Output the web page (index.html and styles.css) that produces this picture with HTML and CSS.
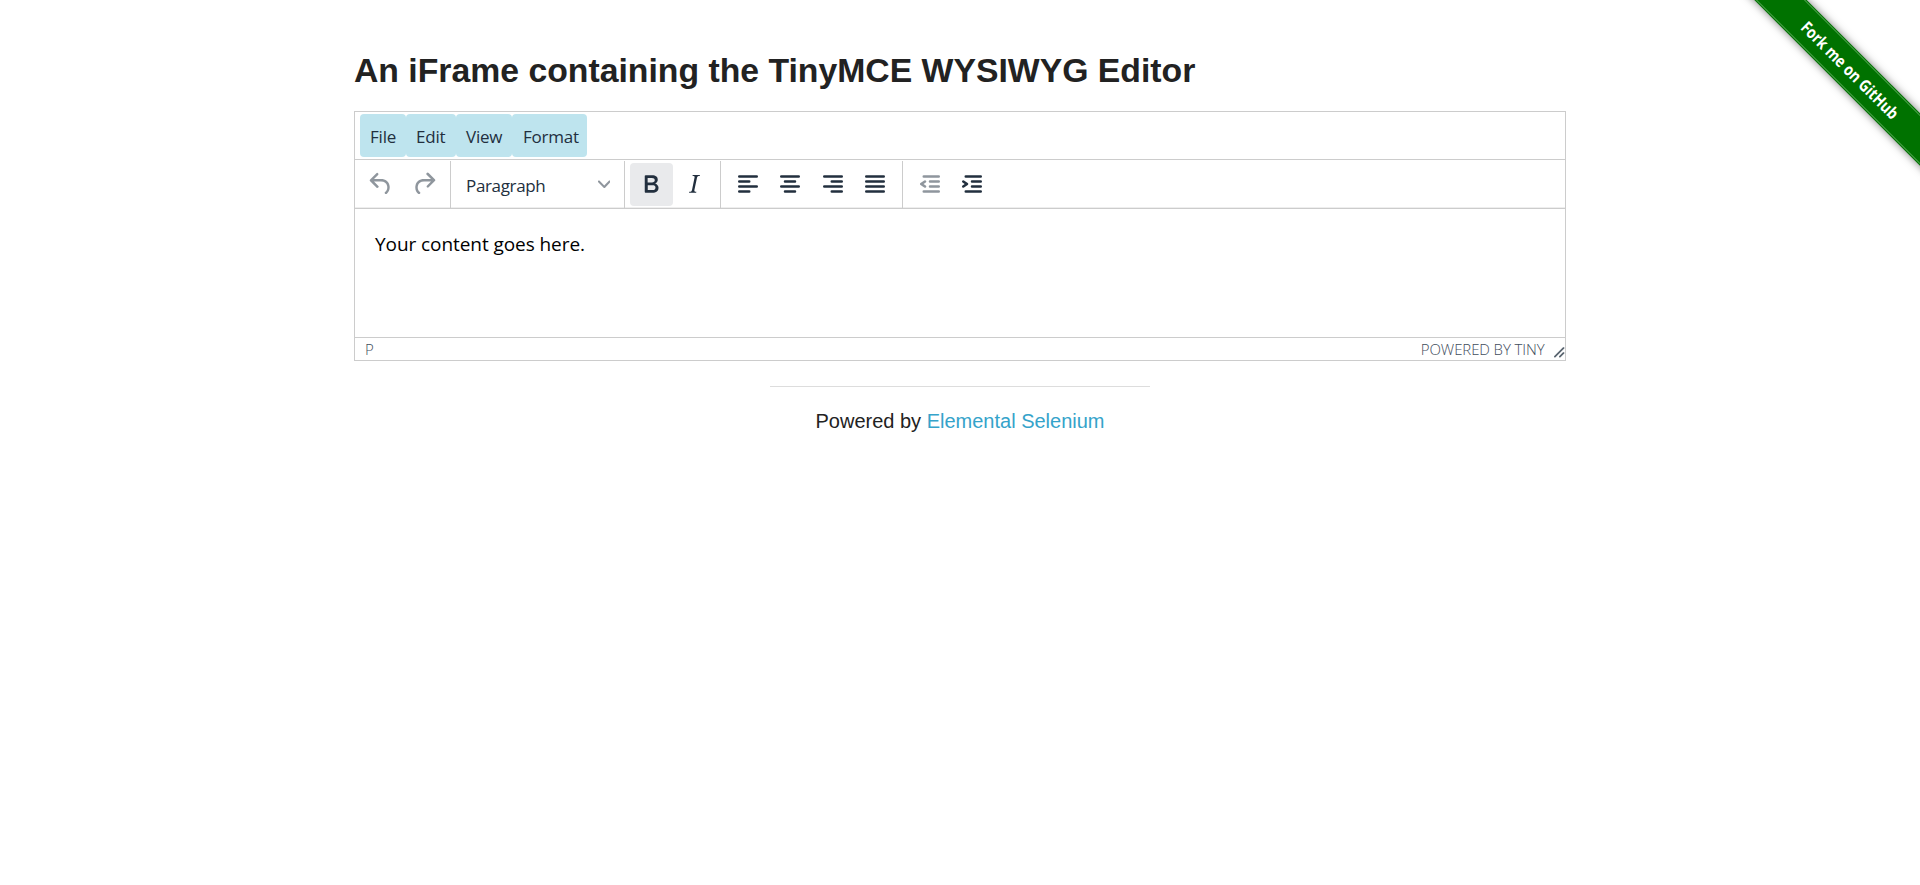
FILE: index.html
```html
<!DOCTYPE html>
<html lang="en">
<head>
<meta charset="utf-8">
<title>The Internet</title>
<link rel="stylesheet" href="styles.css">
</head>
<body>
<a class="ribbon"><span class="ribbon-band"><span class="ribbon-text">Fork me on GitHub</span></span></a>
<main class="page">
  <h3 class="title"><span class="title-text">An iFrame containing the TinyMCE WYSIWYG Editor</span></h3>
  <div class="editor">
    <div class="menubar">
      <button class="menu menu-file">File</button>
      <button class="menu menu-edit">Edit</button>
      <button class="menu menu-view">View</button>
      <button class="menu menu-format">Format</button>
    </div>
    <div class="toolbar">
      <div class="group">
        <button class="tool disabled"><svg class="icon" viewBox="0 0 24 24"><path d="M6.4 8H12c3.7 0 6.2 2 6.8 5.1.6 2.7-.4 5.6-2.3 6.8a1 1 0 0 1-1-1.8c1.1-.6 1.8-2.7 1.4-4.6-.5-2.1-2.1-3.5-4.9-3.5H6.4l3.3 3.3a1 1 0 1 1-1.4 1.4l-5-5a1 1 0 0 1 0-1.4l5-5a1 1 0 0 1 1.4 1.4L6.4 8z"/></svg></button>
        <button class="tool disabled"><svg class="icon" viewBox="0 0 24 24"><path d="M17.6 10H12c-2.8 0-4.4 1.4-4.9 3.5-.4 2 .3 4 1.4 4.6a1 1 0 1 1-1 1.8c-2-1.2-2.9-4.1-2.3-6.8.6-3 3-5.1 6.8-5.1h5.6l-3.3-3.3a1 1 0 1 1 1.4-1.4l5 5a1 1 0 0 1 0 1.4l-5 5a1 1 0 0 1-1.4-1.4l3.3-3.3z"/></svg></button>
      </div>
      <div class="group">
        <button class="select"><span class="select-text">Paragraph</span><svg class="chevron" viewBox="0 0 10 10"><path d="M8.7 2.2c.3-.3.8-.3 1 0 .4.4.4.9 0 1.2L5.7 7.8c-.3.3-.9.3-1.2 0L.2 3.4a.8.8 0 0 1 0-1.2c.3-.3.8-.3 1.1 0L5 6l3.7-3.8z"/></svg></button>
      </div>
      <div class="group group-style">
        <button class="tool active"><svg class="icon" viewBox="0 0 24 24"><path d="M7.8 19c-.3 0-.5 0-.6-.2l-.2-.5V5.7c0-.2 0-.4.2-.5l.6-.2h5c1.5 0 2.7.3 3.5 1 .7.6 1.1 1.4 1.1 2.5a3 3 0 0 1-.6 1.9c-.4.6-1 1-1.6 1.2.4.1.9.3 1.3.6s.8.7 1 1.2c.4.4.5 1 .5 1.6 0 1.3-.4 2.3-1.3 3-.8.7-2.1 1-3.8 1H7.8zm5-8.3c.6 0 1.2-.1 1.6-.5.4-.3.6-.7.6-1.3 0-1.1-.8-1.7-2.3-1.7H9.3v3.5h3.4zm.5 6c.7 0 1.3-.1 1.7-.4.4-.4.6-.9.6-1.5s-.2-1-.7-1.4c-.4-.3-1-.4-2-.4H9.4v3.8h4z"/></svg></button>
        <button class="tool"><svg class="icon" viewBox="0 0 24 24"><path d="M16.7 4.7l-.1.9h-.3c-.6 0-1 0-1.4.3-.3.3-.4.6-.5 1.1l-2.1 9.8v.6c0 .5.4.8 1.4.8h.2l-.2.8H8l.2-.8h.2c1.1 0 1.8-.5 2-1.5l2-9.8.1-.5c0-.6-.4-.8-1.4-.8h-.3l.2-.9h5.8z"/></svg></button>
      </div>
      <div class="group">
        <button class="tool"><svg class="icon" viewBox="0 0 24 24"><path d="M5 5h14a1 1 0 0 1 0 2H5a1 1 0 1 1 0-2zm0 4h8a1 1 0 0 1 0 2H5a1 1 0 1 1 0-2zm0 8h8a1 1 0 0 1 0 2H5a1 1 0 0 1 0-2zm0-4h14a1 1 0 0 1 0 2H5a1 1 0 0 1 0-2z"/></svg></button>
        <button class="tool"><svg class="icon" viewBox="0 0 24 24"><path d="M5 5h14a1 1 0 0 1 0 2H5a1 1 0 1 1 0-2zm3 4h8a1 1 0 0 1 0 2H8a1 1 0 1 1 0-2zm0 8h8a1 1 0 0 1 0 2H8a1 1 0 0 1 0-2zm-3-4h14a1 1 0 0 1 0 2H5a1 1 0 0 1 0-2z"/></svg></button>
        <button class="tool"><svg class="icon" viewBox="0 0 24 24"><path d="M5 5h14a1 1 0 0 1 0 2H5a1 1 0 1 1 0-2zm6 4h8a1 1 0 0 1 0 2h-8a1 1 0 0 1 0-2zm0 8h8a1 1 0 0 1 0 2h-8a1 1 0 0 1 0-2zm-6-4h14a1 1 0 0 1 0 2H5a1 1 0 0 1 0-2z"/></svg></button>
        <button class="tool"><svg class="icon" viewBox="0 0 24 24"><path d="M5 5h14a1 1 0 0 1 0 2H5a1 1 0 1 1 0-2zm0 4h14a1 1 0 0 1 0 2H5a1 1 0 1 1 0-2zm0 4h14a1 1 0 0 1 0 2H5a1 1 0 0 1 0-2zm0 4h14a1 1 0 0 1 0 2H5a1 1 0 0 1 0-2z"/></svg></button>
      </div>
      <div class="group group-last">
        <button class="tool disabled"><svg class="icon" viewBox="0 0 24 24"><path d="M7 5h12a1 1 0 0 1 0 2H7a1 1 0 1 1 0-2zm5 4h7a1 1 0 0 1 0 2h-7a1 1 0 0 1 0-2zm0 4h7a1 1 0 0 1 0 2h-7a1 1 0 0 1 0-2zm-5 4h12a1 1 0 0 1 0 2H7a1 1 0 0 1 0-2zm1.6-3.8a1 1 0 0 1-1.2 1.6l-3-2a1 1 0 0 1 0-1.6l3-2a1 1 0 0 1 1.2 1.6L6.8 12l1.8 1.2z"/></svg></button>
        <button class="tool"><svg class="icon" viewBox="0 0 24 24"><path d="M7 5h12a1 1 0 0 1 0 2H7a1 1 0 1 1 0-2zm5 4h7a1 1 0 0 1 0 2h-7a1 1 0 0 1 0-2zm0 4h7a1 1 0 0 1 0 2h-7a1 1 0 0 1 0-2zm-5 4h12a1 1 0 0 1 0 2H7a1 1 0 0 1 0-2zm-2.6-3.8L6.2 12l-1.8-1.2a1 1 0 0 1 1.2-1.6l3 2a1 1 0 0 1 0 1.6l-3 2a1 1 0 1 1-1.2-1.6z"/></svg></button>
      </div>
    </div>
    <div class="content"><p class="content-text">Your content goes here.</p></div>
    <div class="statusbar">
      <span class="path">P</span>
      <span class="branding">POWERED BY TINY</span>
      <svg class="resize" viewBox="0 0 10 10"><path d="M8.1 1.1A.5.5 0 1 1 9 2l-7 7A.5.5 0 1 1 1 8l7-7zM8.1 5.1A.5.5 0 1 1 9 6l-3 3A.5.5 0 1 1 5 8l3-3z"/></svg>
    </div>
  </div>
  <footer class="footer">
    <hr class="rule">
    <div class="powered">Powered by <a class="link">Elemental Selenium</a></div>
  </footer>
</main>
</body>
</html>
```
FILE: styles.css
```css
* { box-sizing: border-box; }
body { margin: 0; background: #fff; color: #222; font-family: "Liberation Sans", Arial, sans-serif; overflow: hidden; }
button { margin: 0; padding: 0; border: 0; background: none; font: inherit; color: inherit; }
.page { width: 1212px; margin: 0 auto; padding-top: 47px; }
.title { margin: 0; height: 64px; font-size: 33.75px; line-height: 47px; font-weight: 700; white-space: nowrap; }
.editor { height: 250px; border: 1px solid #ccc; display: flex; flex-direction: column; color: #222f3e; font-family: "Open Sans", sans-serif; }
.menubar { height: 48px; padding: 2px 5px 0; display: flex; border-bottom: 1px solid #ccc; }
.menu { height: 43px; background: #bee4ee; border-radius: 4px; text-align: left; padding: 2px 0 0 10px; font-size: 17px; letter-spacing: -.22px; white-space: nowrap; }
.menu-file { width: 46px; }
.menu-edit { width: 50px; }
.menu-view { width: 56px; }
.menu-format { width: 75px; padding-left: 11px; }
.toolbar { height: 49px; display: flex; padding-top: 1px; border-bottom: 1px solid #ccc; box-shadow: inset 0 -1px #eee; }
.group { display: flex; padding: 2px 5px 0; border-right: 1px solid #ccc; height: 47px; }
.group-style { width: 96px; }
.group-last { border-right: 0; padding-left: 5.5px; }
.tool { width: 42.5px; height: 43px; padding-bottom: 1px; display: flex; align-items: center; justify-content: center; border-radius: 4px; }
.active { background: #e9eaec; }
.icon { width: 30px; height: 30px; fill: #222f3e; }
.disabled .icon { opacity: .5; }
.select { width: 163px; height: 43px; padding: 2px 9px 0 10px; display: flex; align-items: center; justify-content: space-between; font-size: 17px; letter-spacing: -.35px; }
.chevron { width: 12.5px; height: 12.5px; fill: #222f3e; opacity: .5; margin-top: -2px; }
.content { flex: 1; padding: 20px; color: #000; }
.content-text { margin: 0; font-size: 19px; letter-spacing: -.07px; line-height: 30px; }
.statusbar { height: 23px; display: flex; align-items: center; border-top: 1px solid #ccc; padding-left: 10px; font-size: 15px; font-weight: 300; letter-spacing: -.1px; color: #3f4d5c; }
.group-style + .group { width: 182px; padding-left: 5.5px; }
.branding { margin-left: auto; }
.resize { width: 12.5px; height: 12.5px; fill: #5a6570; margin: 6px 0 0 8px; }
.footer { text-align: center; }
.rule { width: 380px; height: 1px; border: 0; background: #ddd; margin: 25px auto 0; }
.powered { margin-top: 19px; font-size: 20px; line-height: 30px; }
.link { color: #35a3ca; }
.ribbon { position: absolute; top: 0; right: 0; width: 186px; height: 186px; overflow: hidden; }
.ribbon-band { position: absolute; left: -14px; top: 51px; width: 260px; height: 37px; display: flex; align-items: center; justify-content: center; transform: rotate(45deg); background: #007200; box-shadow: 0 0 9px rgba(0,0,0,.5); color: #fff; font: 700 16.5px "Open Sans", sans-serif; white-space: nowrap; }
.ribbon-band::before { content: ""; position: absolute; inset: 1px 0; border-top: 1px solid #48a048; border-bottom: 1px solid #48a048; }
.ribbon-text { transform: scaleX(.84); }
```
